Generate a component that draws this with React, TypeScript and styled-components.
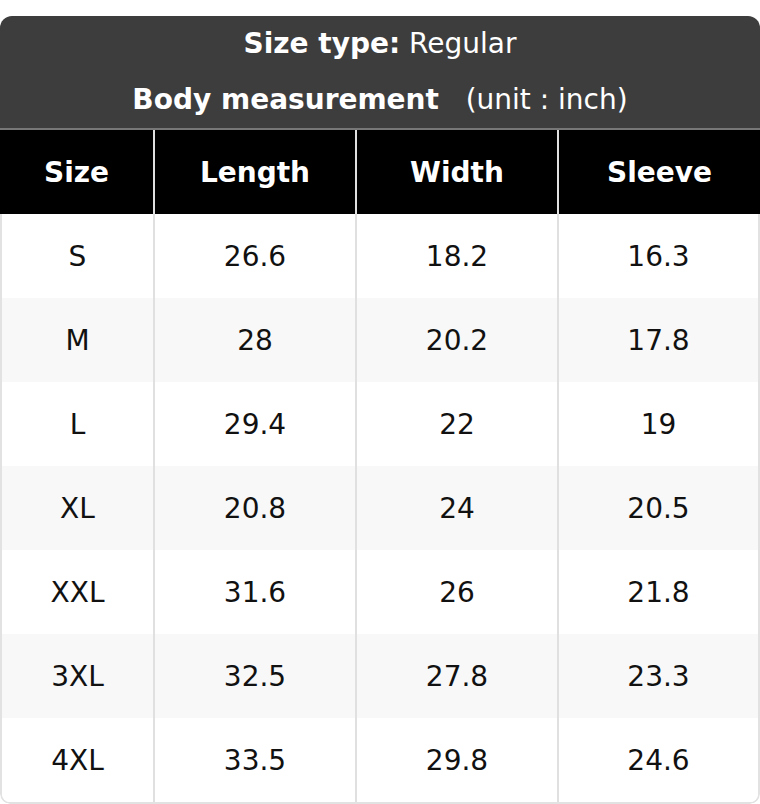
import React from 'react';
import styled, { createGlobalStyle } from 'styled-components';

type TRow = {
  size: string;
  length: string;
  width: string;
  sleeve: string;
};

const rows: TRow[] = [
  { size: 'S', length: '26.6', width: '18.2', sleeve: '16.3' },
  { size: 'M', length: '28', width: '20.2', sleeve: '17.8' },
  { size: 'L', length: '29.4', width: '22', sleeve: '19' },
  { size: 'XL', length: '20.8', width: '24', sleeve: '20.5' },
  { size: 'XXL', length: '31.6', width: '26', sleeve: '21.8' },
  { size: '3XL', length: '32.5', width: '27.8', sleeve: '23.3' },
  { size: '4XL', length: '33.5', width: '29.8', sleeve: '24.6' },
];

const GlobalStyle = createGlobalStyle`
  body {
    margin: 0;
    padding-top: 16px;
    background: #fff;
    font-family: "DejaVu Sans", Verdana, sans-serif;
  }
`;

const Card = styled.div`
  width: 760px;
  border-radius: 12px 12px 10px 10px;
  overflow: hidden;
`;

const Title = styled.div`
  background: #3d3d3d;
  color: #fff;
  font-size: 28px;
  text-align: center;
`;

const TitleLine = styled.div`
  height: 56px;
  line-height: 56px;
  white-space: pre;
`;

const Bold = styled.span`
  font-weight: 700;
`;

const Grid = styled.div<{ dark?: boolean; shaded?: boolean }>`
  display: grid;
  grid-template-columns: 153px 202px 202px 1fr;
  height: 84px;
  background: ${({ dark, shaded }) => (dark ? '#000' : shaded ? '#f8f8f8' : '#fff')};
  color: ${({ dark }) => (dark ? '#fff' : '#111')};
  font-weight: ${({ dark }) => (dark ? 700 : 400)};
  border-top: ${({ dark }) => (dark ? '2px solid #777' : 'none')};
`;

const Cell = styled.div<{ dark?: boolean }>`
  display: flex;
  align-items: center;
  justify-content: center;
  font-size: 28px;
  & + & {
    border-left: 2px solid ${({ dark }) => (dark ? '#777' : '#e0e0e0')};
  }
`;

const Body = styled.div`
  border: 2px solid #e2e2e2;
  border-top: none;
  border-radius: 0 0 10px 10px;
  overflow: hidden;

  ${Grid} {
    grid-template-columns: 151px 202px 202px 1fr;
  }
`;

export default function App() {
  return (
    <>
      <GlobalStyle />
      <Card>
        <Title>
          <TitleLine>
            <Bold>Size type:</Bold> Regular
          </TitleLine>
          <TitleLine>
            <Bold>Body measurement</Bold>{'   '}(unit : inch)
          </TitleLine>
        </Title>
        <Grid dark>
          {['Size', 'Length', 'Width', 'Sleeve'].map((h) => (
            <Cell dark key={h}>
              {h}
            </Cell>
          ))}
        </Grid>
        <Body>
          {rows.map((r, i) => (
            <Grid key={r.size} shaded={i % 2 === 1}>
              <Cell>{r.size}</Cell>
              <Cell>{r.length}</Cell>
              <Cell>{r.width}</Cell>
              <Cell>{r.sleeve}</Cell>
            </Grid>
          ))}
        </Body>
      </Card>
    </>
  );
}
